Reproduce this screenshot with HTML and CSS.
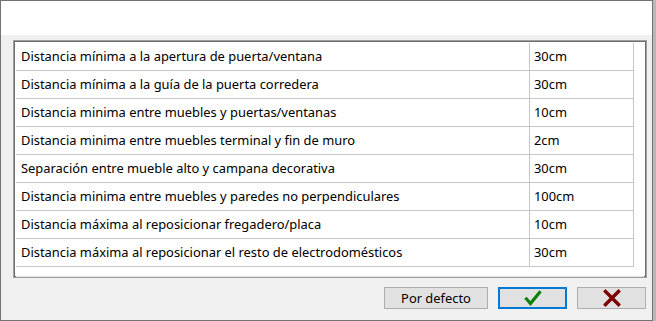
FILE: index.html
```html
<!DOCTYPE html>
<html lang="es">
<head>
  <meta charset="UTF-8">
  <title>Distancias</title>
  <link rel="stylesheet" href="styles.css">
</head>
<body>
<div class="window">
  <div class="header"></div>
  <div class="content">
    <div class="frame">
      <div class="list">
        <div class="row"><div class="name">Distancia mínima a la apertura de puerta/ventana</div><div class="value">30cm</div></div>
        <div class="row"><div class="name">Distancia mínima a la guía de la puerta corredera</div><div class="value">30cm</div></div>
        <div class="row"><div class="name">Distancia minima entre muebles y puertas/ventanas</div><div class="value">10cm</div></div>
        <div class="row"><div class="name">Distancia minima entre muebles terminal y fin de muro</div><div class="value">2cm</div></div>
        <div class="row"><div class="name">Separación entre mueble alto y campana decorativa</div><div class="value">30cm</div></div>
        <div class="row"><div class="name">Distancia minima entre muebles y paredes no perpendiculares</div><div class="value">100cm</div></div>
        <div class="row"><div class="name">Distancia máxima al reposicionar fregadero/placa</div><div class="value">10cm</div></div>
        <div class="row"><div class="name">Distancia máxima al reposicionar el resto de electrodomésticos</div><div class="value">30cm</div></div>
      </div>
    </div>

    <div class="buttons">
      <button class="btn btn-default">Por defecto</button>
      <button class="btn btn-ok">
        <svg width="18" height="16" viewBox="0 0 18 16">
          <path d="M2.5 9 L6.5 13.5 L15.5 2.5" fill="none" stroke="#0a820a" stroke-width="3.2" stroke-linecap="square"/>
        </svg>
      </button>
      <button class="btn btn-cancel">
        <svg width="18" height="18" viewBox="0 0 18 18">
          <path d="M2.5 2.5 L15.5 15.5 M15.5 2.5 L2.5 15.5" fill="none" stroke="#7d0000" stroke-width="3.4" stroke-linecap="square"/>
        </svg>
      </button>
    </div>
  </div>
</div>
</body>
</html>
```

FILE: styles.css
```css
html, body { margin: 0; padding: 0; }
body {
  background: #b8b8b8;
  font-family: "Noto Sans", "Open Sans", Arial, sans-serif;
  font-size: 12.9px;
  color: #000;
  width: 656px;
  height: 321px;
  overflow: hidden;
}
.window {
  width: 653px;
  height: 321px;
  box-sizing: border-box;
  border: 1px solid #737373;
  background: #f0f0f0;
}
.header {
  height: 34px;
  background: #fff;
}
.content {
  padding: 5px 5px 0 12px;
}
.frame {
  height: 238px;
  box-sizing: border-box;
  border: 1px solid #a0a0a0;
  box-shadow: inset 1px 1px 0 #6d6d6d, inset -1px -1px 0 #6d6d6d;
  background: #fff;
  padding: 2px 2px 0 2px;
  overflow: hidden;
}
.list {
  height: 233px;
  border-bottom: 1px solid #e3e3e3;
  overflow: hidden;
}
.row {
  display: flex;
  height: 27px;
  line-height: 27px;
  border-bottom: 1px solid #c6c6c6;
  width: 618px;
}
.name {
  width: 508px;
  padding-left: 5px;
  border-right: 1px solid #c6c6c6;
  white-space: nowrap;
}
.value {
  width: 99px;
  padding-left: 4px;
  border-right: 1px solid #c6c6c6;
}
.buttons {
  display: flex;
  justify-content: flex-end;
  gap: 10px;
  margin-top: 9px;
  padding-right: 1px;
}
.btn {
  height: 22px;
  box-sizing: border-box;
  background: #e1e1e1;
  border: 1px solid #adadad;
  font-family: inherit;
  font-size: 12.9px;
  color: #000;
  padding: 0;
  display: flex;
  align-items: center;
  justify-content: center;
}
.btn-default { width: 104px; }
.btn-ok { width: 69px; border: 2px solid #0078d7; }
.btn-cancel { width: 69px; }
```
